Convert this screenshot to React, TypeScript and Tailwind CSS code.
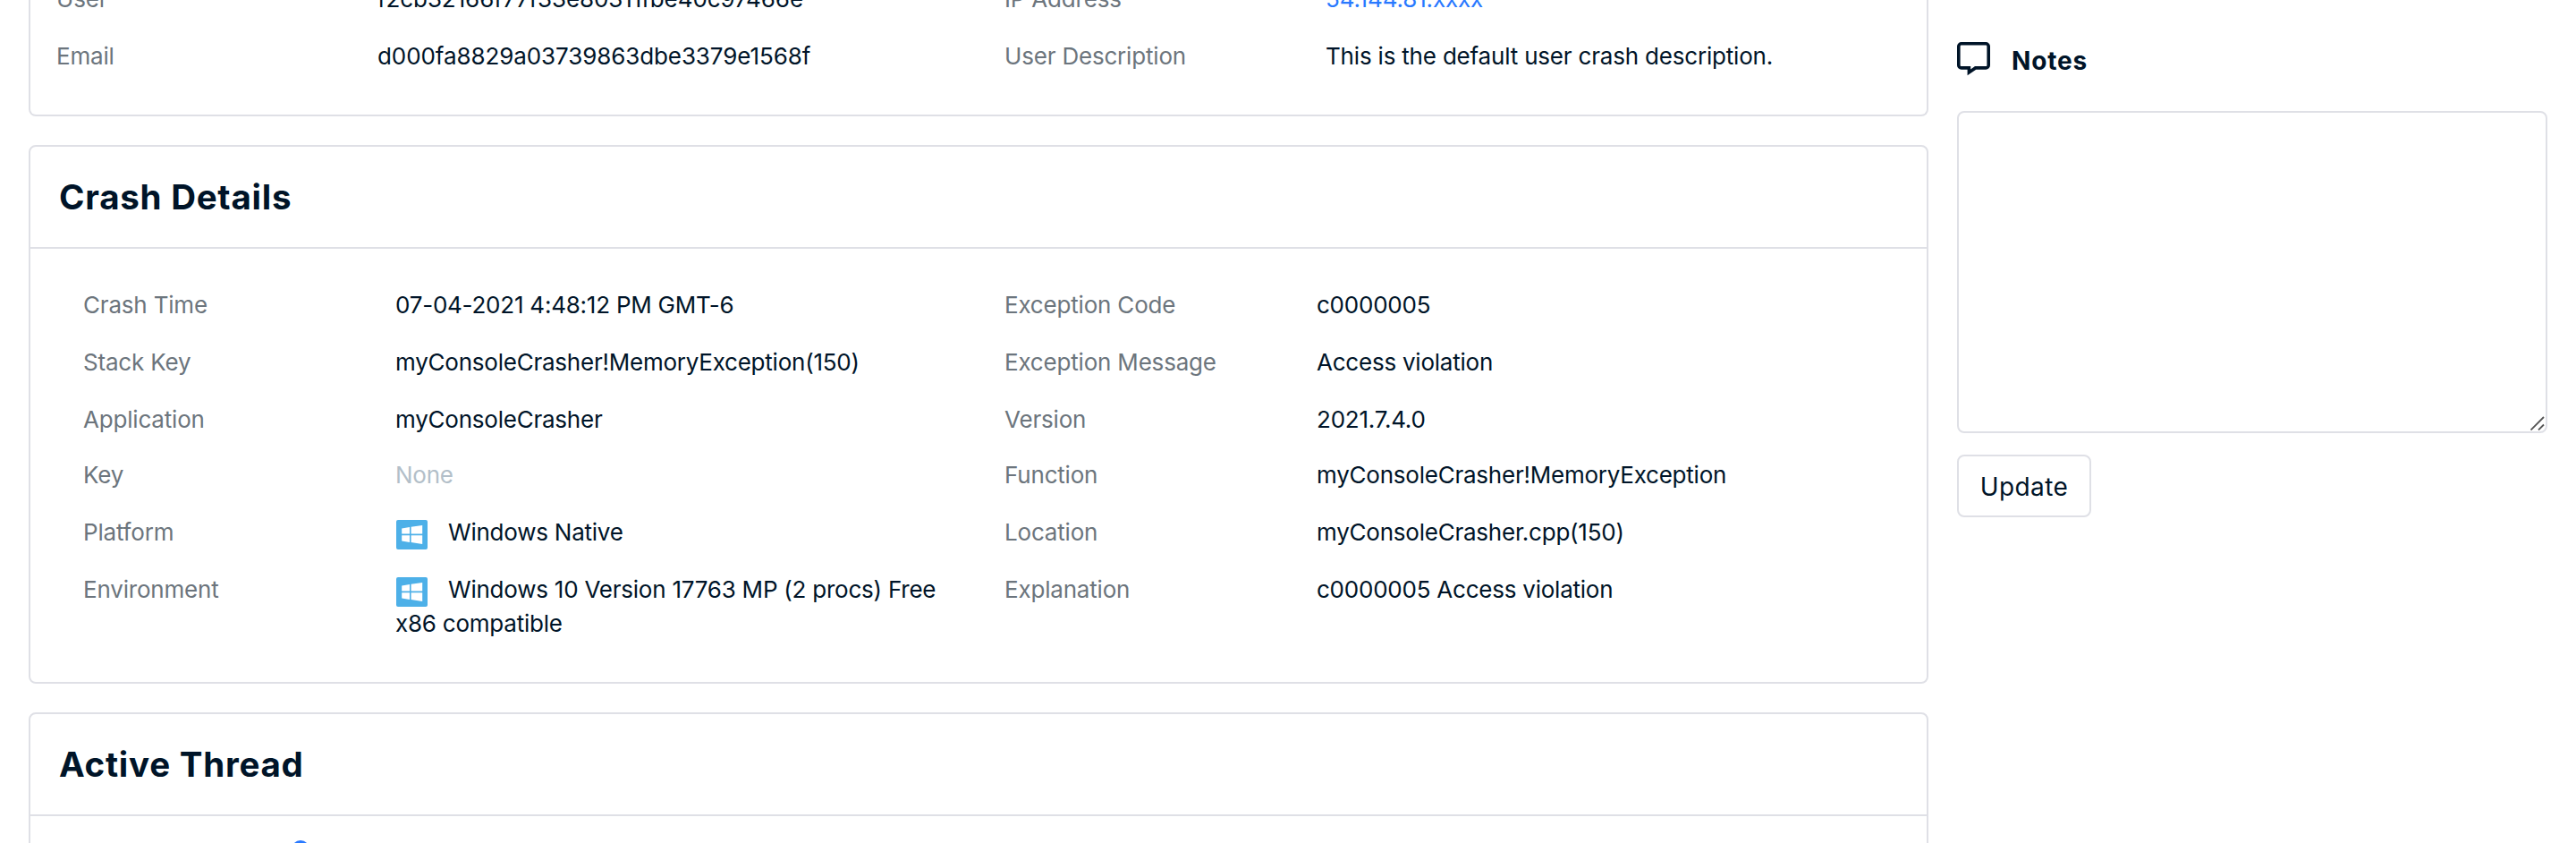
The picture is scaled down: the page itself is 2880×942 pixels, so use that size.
import { Fragment, type ReactNode } from "react";

type Field = {
  label: string;
  value: ReactNode;
  className?: string;
};

function WindowsIcon() {
  return (
    <svg
      className="mr-[23px] ml-px inline-block h-[33px] w-[35px] align-[-10px]"
      viewBox="0 0 35 33"
      aria-hidden="true"
    >
      <rect width="35" height="33" rx="2" fill="#4db0e8" />
      <path
        fill="#fff"
        d="M6.2 9.6 15 8.1V15.6H6.2ZM16.6 7.8 29.2 6V15.6H16.6ZM6.2 17.2H15V24.9L6.2 23.6ZM16.6 17.2H29.2V27L16.6 25.1Z"
      />
    </svg>
  );
}

function NoteIcon() {
  return (
    <svg
      className="h-[38px] w-[37px]"
      viewBox="0 0 37 38"
      fill="none"
      stroke="#001428"
      strokeWidth="3.6"
      aria-hidden="true"
    >
      <path d="M4.8 1.8H32.2a3 3 0 0 1 3 3V25.9a3 3 0 0 1-3 3H20.6L13.4 33.9V28.9H4.8a3 3 0 0 1-3-3V4.8a3 3 0 0 1 3-3Z" />
    </svg>
  );
}

function Label({ children }: { children: ReactNode }) {
  return <dt className="pl-px tracking-[-0.19px] text-[#6c757d]">{children}</dt>;
}

function CardTitle({ children }: { children: ReactNode }) {
  return (
    <header className="flex h-[114px] items-center border-b-2 border-[#dfe0e6] px-8 pb-px">
      <h2 className="text-[38.5px] leading-[46px] font-bold tracking-[0.75px]">{children}</h2>
    </header>
  );
}

const userFields: Field[] = [
  { label: "User", value: "f2cb32166f77f33e80311fbe40c97466e", className: "tracking-[-0.09px]" },
  { label: "IP Address", value: "54.144.81.xxxx", className: "tracking-[-0.14px] text-[#2979ff]" },
  { label: "Email", value: "d000fa8829a03739863dbe3379e1568f", className: "tracking-[-0.09px]" },
  {
    label: "User Description",
    value: "This is the default user crash description.",
    className: "tracking-[-0.19px]",
  },
];

const crashFields: Field[] = [
  { label: "Crash Time", value: "07-04-2021 4:48:12 PM GMT-6" },
  { label: "Exception Code", value: "c0000005" },
  { label: "Stack Key", value: "myConsoleCrasher!MemoryException(150)" },
  { label: "Exception Message", value: "Access violation" },
  { label: "Application", value: "myConsoleCrasher" },
  { label: "Version", value: "2021.7.4.0" },
  { label: "Key", value: "None", className: "text-[#b3bfc9]" },
  { label: "Function", value: "myConsoleCrasher!MemoryException" },
  {
    label: "Platform",
    value: (
      <>
        <WindowsIcon />
        Windows Native
      </>
    ),
  },
  { label: "Location", value: "myConsoleCrasher.cpp(150)" },
  {
    label: "Environment",
    value: (
      <>
        <WindowsIcon />
        Windows 10 Version 17763 MP (2 procs) Free x86 compatible
      </>
    ),
  },
  { label: "Explanation", value: "c0000005 Access violation" },
];

export default function App() {
  return (
    <div className="flex h-[942px] w-[2880px] gap-8 overflow-hidden bg-white px-8 font-['Inter',sans-serif] text-[26px] leading-[38px] text-[#001428]">
      <main className="flex w-[2124px] shrink-0 flex-col gap-8">
        <section className="h-[130px] shrink-0 rounded-b-lg border-2 border-t-0 border-[#dfe0e6] pl-7">
          <dl className="-mt-5 grid grid-cols-[360px_700px_360px_640px] grid-rows-[64px_38px]">
            {userFields.map((f) => (
              <Fragment key={f.label}>
                <Label>{f.label}</Label>
                <dd className={f.className}>{f.value}</dd>
              </Fragment>
            ))}
          </dl>
        </section>

        <section className="shrink-0 rounded-lg border-2 border-[#dfe0e6]">
          <CardTitle>Crash Details</CardTitle>
          <dl className="grid grid-cols-[350px_680px_350px_640px] grid-rows-[64px_64px_62px_64px_64px_76px] pt-11 pb-[46px] pl-[58px]">
            {crashFields.map((f) => (
              <Fragment key={f.label}>
                <Label>{f.label}</Label>
                <dd className={`pr-[60px] tracking-[-0.23px] ${f.className ?? ""}`}>{f.value}</dd>
              </Fragment>
            ))}
          </dl>
        </section>

        <section className="h-[400px] shrink-0 rounded-lg border-2 border-[#dfe0e6]">
          <CardTitle>Active Thread</CardTitle>
          <div className="pt-[27px] pl-[292px]">
            <span className="block size-5 rounded-full bg-[#2979ff]" />
          </div>
        </section>
      </main>

      <aside className="flex w-[660px] shrink-0 flex-col items-start pt-[47px]">
        <div className="flex h-[77px] items-start gap-6">
          <NoteIcon />
          <h3 className="pt-0.5 text-[28px] font-bold tracking-[0.85px]">Notes</h3>
        </div>
        <div className="relative h-[360px] w-full">
          <textarea
            aria-label="Notes"
            className="block h-full w-full resize-none rounded-lg border-2 border-[#dfe0e6] p-4 outline-none"
          />
          <svg
            className="absolute right-[3px] bottom-[3px] size-4"
            viewBox="0 0 16 16"
            stroke="#555"
            strokeWidth="1.8"
            aria-hidden="true"
          >
            <path d="M0.5 15.5 15 1M9 15.5 15 9.5" />
          </svg>
        </div>
        <button
          type="button"
          className="mt-6 h-[70px] w-[150px] rounded-lg border-2 border-[#dfe0e6] pt-0.5 text-[28px] tracking-[0.4px]"
        >
          Update
        </button>
      </aside>
    </div>
  );
}
